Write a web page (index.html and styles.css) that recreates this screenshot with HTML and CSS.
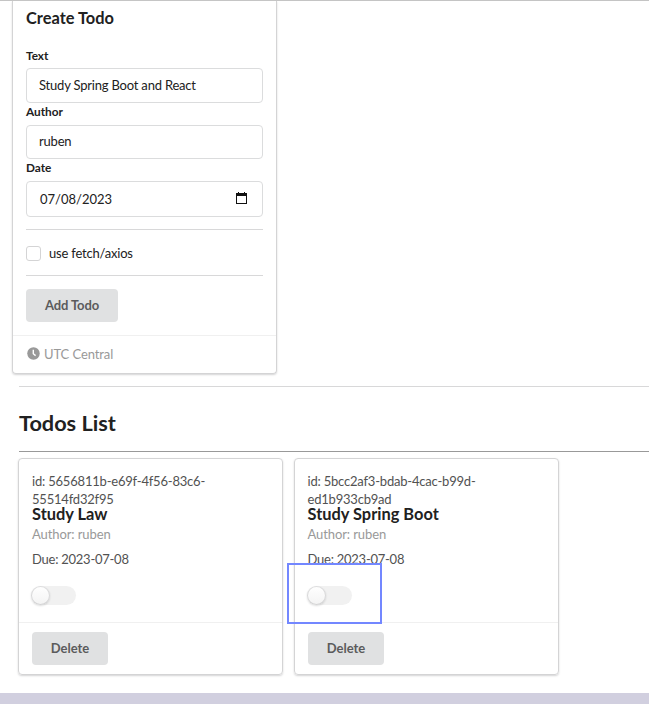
FILE: index.html
```html
<!DOCTYPE html>
<html lang="en">
<head>
<meta charset="utf-8">
<title>Todos</title>
<link rel="stylesheet" href="styles.css">
</head>
<body>
<main class="page">
  <section class="card form-card">
    <form class="form">
      <h3 class="form-title">Create Todo</h3>
      <label class="label">Text</label>
      <div class="input">Study Spring Boot and React</div>
      <label class="label">Author</label>
      <div class="input">ruben</div>
      <label class="label">Date</label>
      <div class="input date"><span>07/08/2023</span>
        <svg class="calendar" width="11" height="12" viewBox="0 0 11 12"><path d="M0 1h2V0h1v1h5V0h1v1h2v11H0zM1 4v7h9V4z" fill="#111" fill-rule="evenodd"/></svg>
      </div>
      <div class="check-row"><span class="box"></span><span>use fetch/axios</span></div>
      <button class="button add" type="button">Add Todo</button>
    </form>
    <div class="extra">
      <svg width="13" height="13" viewBox="0 0 13 13"><circle cx="6.5" cy="6.5" r="6.25" fill="#999"/><path d="M6.3 2.8v3.9l2.3 1.9" fill="none" stroke="#fff" stroke-width="1.4"/></svg>
      <span>UTC Central</span>
    </div>
  </section>
  <section class="list">
    <h2 class="list-title">Todos List</h2>
    <div class="cards">
      <article class="card todo">
        <div class="todo-body">
          <p class="id">id: 5656811b-e69f-4f56-83c6-<br>55514fd32f95</p>
          <h3 class="name">Study Law</h3>
          <p class="author">Author: ruben</p>
          <p class="due">Due: 2023-07-08</p>
          <div class="toggle"><span class="knob"></span></div>
        </div>
        <div class="actions"><button class="button" type="button">Delete</button></div>
      </article>
      <article class="card todo">
        <div class="todo-body">
          <p class="id">id: 5bcc2af3-bdab-4cac-b99d-<br>ed1b933cb9ad</p>
          <h3 class="name">Study Spring Boot</h3>
          <p class="author">Author: ruben</p>
          <p class="due">Due: 2023-07-08</p>
          <div class="toggle"><span class="knob"></span></div>
        </div>
        <div class="actions"><button class="button" type="button">Delete</button></div>
        <span class="marker"></span>
      </article>
    </div>
  </section>
</main>
<footer class="strip"></footer>
</body>
</html>
```
FILE: styles.css
```css
* { box-sizing: border-box; }
body {
  margin: 0;
  background: #fff;
  color: #212121;
  font: 13px/18px Lato, "Liberation Sans", sans-serif;
  letter-spacing: -.2px;
  overflow: hidden;
}
h2, h3, p { margin: 0; }
h2, h3, label { letter-spacing: 0; }
.page { height: 693px; border-top: 1px solid #c4c4c4; }
.strip { height: 11px; background: #d1cfdf; }
.card {
  position: relative;
  width: 265px;
  border: 1px solid #d4d4d5;
  border-radius: 4px;
  box-shadow: 0 1px 2px #d4d4d5;
}
.form-card {
  height: 373px;
  margin-left: 12px;
  border-top: 0;
  border-radius: 0 0 4px 4px;
}
.form { height: 334px; padding: 7px 13px 0; }
.form-title { font-size: 16.4px; line-height: 20px; height: 40px; }
.label { display: block; height: 20px; padding-top: 1px; font-size: 11.8px; line-height: 14px; font-weight: 700; }
.label:not(:nth-of-type(1)) { height: 22px; padding-top: 2px; }
.input {
  display: flex;
  align-items: center;
  height: 35px;
  padding: 0 12px 2px;
  border: 1px solid #dbdcdd;
  border-radius: 4px;
}
.input + .label + .input { height: 34px; }
.input + .label + .date { height: 36px; justify-content: space-between; padding: 0 15px 0 13px; letter-spacing: 0; }
.calendar { margin-top: -2px; }
.check-row {
  display: flex;
  align-items: center;
  gap: 8px;
  height: 47px;
  margin: 12px 0 13px;
  padding-top: 1px;
  border: solid #d8d8d9;
  border-width: 1px 0;
}
.box { width: 15px; height: 15px; border: 1px solid #d4d4d5; border-radius: 3px; }
.button {
  display: block;
  width: 76px;
  height: 33px;
  padding: 0 0 2px;
  border: 0;
  border-radius: 4px;
  background: #e0e1e2;
  color: #5b5b5c;
  font: 700 13px/18px Lato, "Liberation Sans", sans-serif;
}
.add { width: 92px; letter-spacing: -.1px; }
.extra {
  display: flex;
  align-items: center;
  gap: 5px;
  height: 38px;
  padding: 0 0 2px 14px;
  border-top: 1px solid #f0f0f0;
  color: #999;
  letter-spacing: -.1px;
}
.extra span { margin-left: -1px; }
.list { margin: 12px 0 0 19px; border-top: 1px solid #d8d8d9; }
.list-title {
  height: 65px;
  padding-top: 22px;
  border-bottom: 1px solid #999;
  font-size: 21.7px;
  line-height: 28px;
}
.cards { display: flex; gap: 11px; margin: 6px 0 0 -1px; }
.todo { height: 217px; color: #525252; }
.todo-body { height: 163px; padding: 13px 13px 0; }
.todo + .todo .todo-body { padding-left: 12.5px; }
.name { font-size: 16.4px; line-height: 20px; margin-top: -4px; color: #212121; }
.author { margin-top: 1px; color: #999; letter-spacing: -.1px; }
.due { margin-top: 7px; letter-spacing: -.25px; }
.toggle { width: 44px; height: 19px; margin-top: 18px; border-radius: 10px; background: #f1f1f1; }
.knob {
  display: block;
  width: 19px;
  height: 19px;
  margin-left: -1px;
  border-radius: 50%;
  background: linear-gradient(#fff, #f3f3f3);
  box-shadow: 0 1px 2px rgba(34,36,38,.16), inset 0 0 0 1px rgba(34,36,38,.15);
}
.actions { padding: 9px 13px; border-top: 1px solid #f0f0f0; }
.marker {
  position: absolute;
  left: -8px;
  top: 104px;
  width: 95px;
  height: 61px;
  border: 2px solid #7387ff;
}
```
